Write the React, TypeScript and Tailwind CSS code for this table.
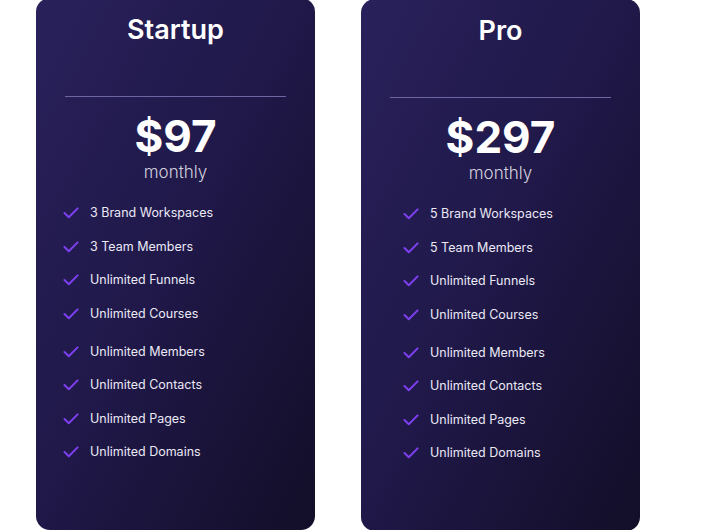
const plans = [
  {
    name: "Startup",
    price: "$97",
    shift: "-mt-[2px]",
    indent: "pl-[27px]",
    features: [
      "3 Brand Workspaces",
      "3 Team Members",
      "Unlimited Funnels",
      "Unlimited Courses",
      "Unlimited Members",
      "Unlimited Contacts",
      "Unlimited Pages",
      "Unlimited Domains",
    ],
  },
  {
    name: "Pro",
    price: "$297",
    shift: "-mt-[1px]",
    indent: "pl-[42px]",
    features: [
      "5 Brand Workspaces",
      "5 Team Members",
      "Unlimited Funnels",
      "Unlimited Courses",
      "Unlimited Members",
      "Unlimited Contacts",
      "Unlimited Pages",
      "Unlimited Domains",
    ],
  },
];

function Check() {
  return (
    <svg width="16" height="12" viewBox="0 0 16 12" fill="none" className="shrink-0">
      <path d="M1.5 6 L5.8 10.2 L14.6 1.4" stroke="#7d3ff0" strokeWidth="2" strokeLinecap="round" strokeLinejoin="round" />
    </svg>
  );
}

function PlanCard({ plan }: { plan: (typeof plans)[number] }) {
  return (
    <div
      className={`${plan.shift} flex h-[532px] w-[279px] flex-col rounded-[14px] bg-gradient-to-br from-[#29215b] via-[#1f1848] to-[#130e28] pt-[2px]`}
    >
      <h2 className="pt-[12px] text-center text-[27px] font-semibold leading-[36px] text-white">{plan.name}</h2>
      <div className="mx-[29px] mt-[48px] h-px bg-[#6e66a3]" />
      <div className="mt-[15px] text-center text-[44px] font-bold leading-[48px] text-white">{plan.price}</div>
      <div className="mt-[2px] text-center text-[17px] font-light leading-[20px] text-[#d2d0de]">monthly</div>
      <ul className={`mt-[21px] flex flex-col ${plan.indent}`}>
        {plan.features.map((f, i) => (
          <li
            key={f}
            className={`flex h-[20px] items-center gap-[11px] ${i === 0 ? "" : i === 4 ? "mt-[18px]" : "mt-[13.5px]"}`}
          >
            <Check />
            <span className="text-[12.5px] leading-[20px] text-[#ebe9f5]">{f}</span>
          </li>
        ))}
      </ul>
    </div>
  );
}

export default function App() {
  return (
    <div
      className="flex h-[530px] w-[703px] items-start gap-[46px] overflow-hidden bg-white pl-[36px]"
      style={{ fontFamily: "Inter, 'Noto Sans', sans-serif" }}
    >
      {plans.map((p) => (
        <PlanCard key={p.name} plan={p} />
      ))}
    </div>
  );
}
